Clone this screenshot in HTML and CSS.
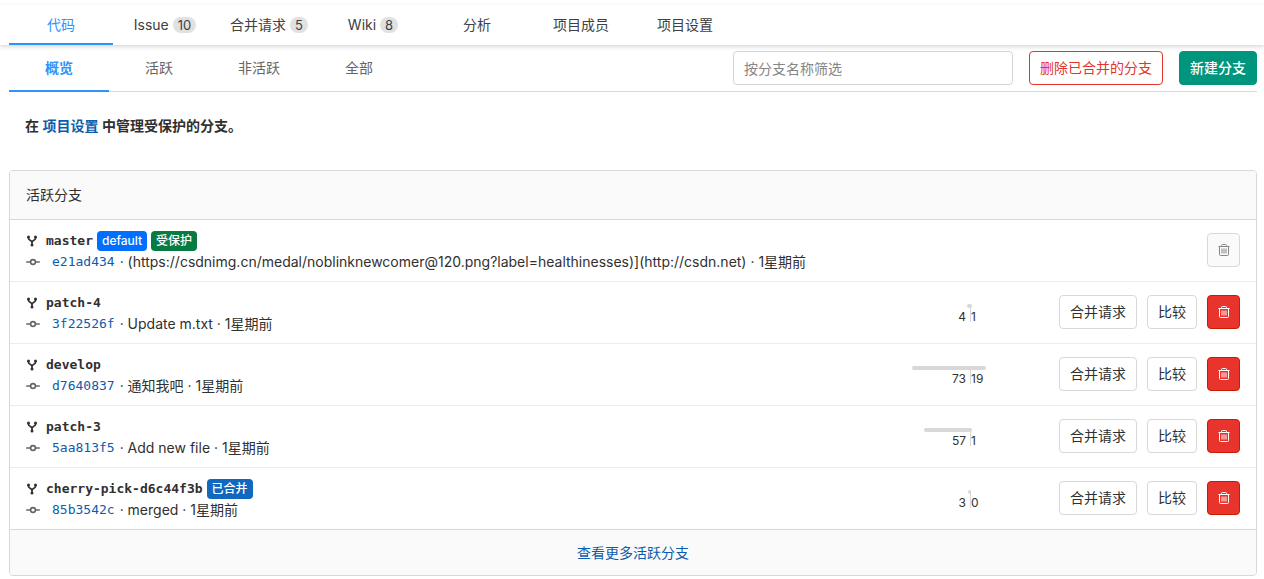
FILE: index.html
```html
<!DOCTYPE html>
<html lang="zh-CN">
<head>
<meta charset="utf-8">
<meta name="viewport" content="width=device-width, initial-scale=1">
<title>分支</title>
<link rel="stylesheet" href="styles.css">
</head>
<body>
<svg class="sprite" aria-hidden="true">
  <symbol id="fork" viewBox="0 0 12 12">
    <path d="M2.500 2v1.500C2.500 5.500 6 5 6 7.500V10M9.500 2v1.500C9.500 5.500 6 5 6 7.500" fill="none" stroke="currentColor" stroke-width="1.700"/>
    <circle cx="2.500" cy="2" r="1.500"/><circle cx="9.500" cy="2" r="1.500"/><circle cx="6" cy="10" r="1.500"/>
  </symbol>
  <symbol id="commit" viewBox="0 0 14 14">
    <path d="M0.700 7H4.500M9.500 7H13.300" fill="none" stroke="currentColor" stroke-width="1.500" stroke-linecap="round"/>
    <circle cx="7" cy="7" r="2.400" fill="none" stroke="currentColor" stroke-width="1.600"/>
  </symbol>
  <symbol id="trash" viewBox="0 0 12 14">
    <path d="M0.500 3.500h11M3.500 3.500v-1q0-1 1-1h3q1 0 1 1v1M1.500 3.500v8q0 1 1 1h7q1 0 1-1v-8M4 5.500v5M6 5.500v5M8 5.500v5" fill="none" stroke="currentColor"/>
  </symbol>
</svg>
<nav class="main-nav">
  <a class="current" href="#">代码</a>
  <a href="#">Issue<span class="count">10</span></a>
  <a href="#">合并请求<span class="count">5</span></a>
  <a href="#">Wiki<span class="count">8</span></a>
  <a href="#">分析</a>
  <a href="#">项目成员</a>
  <a href="#">项目设置</a>
</nav>
<main class="page">
  <div class="toolbar">
    <nav class="sub-nav">
      <a class="current" href="#">概览</a>
      <a href="#">活跃</a>
      <a href="#">非活跃</a>
      <a href="#">全部</a>
    </nav>
    <div class="tools">
      <input class="search" type="search" placeholder="按分支名称筛选" aria-label="按分支名称筛选">
      <button class="btn btn-outline-danger" type="button">删除已合并的分支</button>
      <button class="btn btn-success" type="button">新建分支</button>
    </div>
  </div>
  <p class="notice">在 <a href="#">项目设置</a> 中管理受保护的分支。</p>
  <section class="panel">
    <h2 class="panel-head">活跃分支</h2>
    <ul class="branches">
      <li class="branch">
        <div class="info">
          <div class="title"><svg class="fork"><use href="#fork"/></svg><a class="name" href="#">master</a><span class="badge default">default</span><span class="badge protected">受保护</span></div>
          <div class="commit"><svg class="commit-icon"><use href="#commit"/></svg><a class="sha" href="#">e21ad434</a><span>· (https://csdnimg.cn/medal/noblinknewcomer@120.png?label=healthinesses)](http://csdn.net) · 1星期前</span></div>
        </div>
        <div class="actions">
          <button class="btn btn-icon" type="button" disabled aria-label="删除"><svg class="trash"><use href="#trash"/></svg></button>
        </div>
      </li>
      <li class="branch">
        <div class="info">
          <div class="title"><svg class="fork"><use href="#fork"/></svg><a class="name" href="#">patch-4</a></div>
          <div class="commit"><svg class="commit-icon"><use href="#commit"/></svg><a class="sha" href="#">3f22526f</a><span>· Update m.txt · 1星期前</span></div>
        </div>
        <div class="graph">
          <div class="side behind"><i class="bar" style="width:3px"></i><span>4</span></div>
          <div class="side ahead"><i class="bar" style="width:2px"></i><span>1</span></div>
        </div>
        <div class="actions">
          <button class="btn" type="button">合并请求</button>
          <button class="btn" type="button">比较</button>
          <button class="btn btn-icon btn-danger" type="button" aria-label="删除"><svg class="trash"><use href="#trash"/></svg></button>
        </div>
      </li>
      <li class="branch">
        <div class="info">
          <div class="title"><svg class="fork"><use href="#fork"/></svg><a class="name" href="#">develop</a></div>
          <div class="commit"><svg class="commit-icon"><use href="#commit"/></svg><a class="sha" href="#">d7640837</a><span>· 通知我吧 · 1星期前</span></div>
        </div>
        <div class="graph">
          <div class="side behind"><i class="bar" style="width:58px"></i><span>73</span></div>
          <div class="side ahead"><i class="bar" style="width:16px"></i><span>19</span></div>
        </div>
        <div class="actions">
          <button class="btn" type="button">合并请求</button>
          <button class="btn" type="button">比较</button>
          <button class="btn btn-icon btn-danger" type="button" aria-label="删除"><svg class="trash"><use href="#trash"/></svg></button>
        </div>
      </li>
      <li class="branch">
        <div class="info">
          <div class="title"><svg class="fork"><use href="#fork"/></svg><a class="name" href="#">patch-3</a></div>
          <div class="commit"><svg class="commit-icon"><use href="#commit"/></svg><a class="sha" href="#">5aa813f5</a><span>· Add new file · 1星期前</span></div>
        </div>
        <div class="graph">
          <div class="side behind"><i class="bar" style="width:46px"></i><span>57</span></div>
          <div class="side ahead"><i class="bar" style="width:2px"></i><span>1</span></div>
        </div>
        <div class="actions">
          <button class="btn" type="button">合并请求</button>
          <button class="btn" type="button">比较</button>
          <button class="btn btn-icon btn-danger" type="button" aria-label="删除"><svg class="trash"><use href="#trash"/></svg></button>
        </div>
      </li>
      <li class="branch">
        <div class="info">
          <div class="title"><svg class="fork"><use href="#fork"/></svg><a class="name" href="#">cherry-pick-d6c44f3b</a><span class="badge merged">已合并</span></div>
          <div class="commit"><svg class="commit-icon"><use href="#commit"/></svg><a class="sha" href="#">85b3542c</a><span>· merged · 1星期前</span></div>
        </div>
        <div class="graph">
          <div class="side behind"><i class="bar" style="width:2px"></i><span>3</span></div>
          <div class="side ahead"><i class="bar" style="width:0"></i><span>0</span></div>
        </div>
        <div class="actions">
          <button class="btn" type="button">合并请求</button>
          <button class="btn" type="button">比较</button>
          <button class="btn btn-icon btn-danger" type="button" aria-label="删除"><svg class="trash"><use href="#trash"/></svg></button>
        </div>
      </li>
    </ul>
    <div class="panel-foot"><a href="#">查看更多活跃分支</a></div>
  </section>
</main>
</body>
</html>
```

FILE: styles.css
```css
* { box-sizing: border-box; }
body {
  margin: 0;
  background: #fff;
  color: #303030;
  font: 14px/20px Inter, "Noto Sans CJK SC", sans-serif;
}
a { color: #0b5cad; text-decoration: none; }
.sprite { display: none; }
svg { fill: currentColor; flex: none; }

.main-nav {
  display: flex;
  margin-top: 4px;
  padding: 0 8px 0 9px;
  border-top: 1px solid #fafafa;
  box-shadow: 0 2px 4px rgba(0, 0, 0, 0.15);
}
.main-nav a {
  display: flex;
  align-items: center;
  justify-content: center;
  gap: 4px;
  width: 104px;
  height: 40px;
  padding-top: 2px;
  border-bottom: 2px solid transparent;
  color: #404040;
}
.count {
  padding: 0 5px;
  border-radius: 8px;
  background: #e1e1e1;
  font-size: 13px;
  line-height: 16px;
}
.main-nav .current, .sub-nav .current { border-color: #2e93fa; color: #2e93fa; }

.page { padding: 0 7px 3px 9px; }
.toolbar {
  display: flex;
  justify-content: space-between;
  align-items: flex-start;
  border-bottom: 1px solid #d8d8d8;
}
.sub-nav { display: flex; margin-bottom: -1px; }
.sub-nav a {
  width: 100px;
  height: 47px;
  padding-top: 13px;
  border-bottom: 2px solid transparent;
  color: #666;
  text-align: center;
}
.sub-nav .current { font-weight: 600; }
.tools { display: flex; gap: 16px; padding-top: 6px; }
.search {
  width: 280px;
  height: 34px;
  padding: 6px 10px;
  border: 1px solid #d4d4d4;
  border-radius: 4px;
  font: inherit;
}
.search::placeholder { color: #868686; opacity: 1; }
.btn {
  height: 34px;
  padding: 0 10px;
  border: 1px solid #d8d8d8;
  border-radius: 4px;
  background: #fff;
  color: #303030;
  font: inherit;
  white-space: nowrap;
}
.btn-outline-danger { border-color: #e5342d; color: #e5342d; }
.btn-success { border-color: #00967d; background: #00967d; color: #fff; font-weight: 500; }
.btn-icon { display: grid; place-items: center; width: 33px; padding: 0; }
.btn-icon:disabled { background: #fafafa; color: #868686; }
.btn-danger { border-color: #c91c00; background: #e9342d; color: #fff; }

.notice { margin: 24px 16px 34px; font-weight: 600; }

.panel { border: 1px solid #d8d8d8; border-radius: 4px; overflow: hidden; }
.panel-head {
  margin: 0;
  padding: 14px 16px;
  border-bottom: 1px solid #d8d8d8;
  background: #fafafa;
  font-size: 14px;
  font-weight: 400;
}
.branches { margin: 0; padding: 0; list-style: none; }
.branch {
  display: grid;
  grid-template-columns: 1fr 160px 190px;
  align-items: start;
  padding: 10px 16px 9px;
  border-bottom: 1px solid #ececec;
}
.branch:last-child { border-color: #d8d8d8; }
.info { grid-column: 1 / 2; grid-row: 1; white-space: nowrap; }
.title, .commit { display: flex; align-items: center; height: 21px; }
.title { height: 21px; }
.name, .sha { font-family: "DejaVu Sans Mono", monospace; font-size: 13px; }
.name { margin-left: 8px; color: #303030; font-weight: 700; }
.sha { margin: 0 5px 0 12px; }
.fork { width: 12px; height: 12px; }
.commit-icon { width: 14px; height: 14px; color: #666; }
.badge {
  margin-left: 4px;
  padding: 0 5px;
  border-radius: 4px;
  color: #fff;
  font-size: 12px;
  font-weight: 500;
}
.default { background: #006eff; }
.protected { background: #087b42; }
.merged { background: #1068bf; }
.graph { grid-column: 2; grid-row: 1; display: flex; padding-top: 12px; font-size: 12px; line-height: 18px; }
.side { display: flex; flex-direction: column; width: 50%; }
.behind { align-items: flex-end; }
.behind span { padding-right: 4px; }
.ahead { background: linear-gradient(#d8d8d8, #d8d8d8) 0 0 / 1px 18px no-repeat; }
.ahead span { padding-left: 1px; }
.bar { height: 4px; background: #d8d8d8; }
.behind .bar { border-radius: 2px 0 0 2px; }
.ahead .bar { border-radius: 0 2px 2px 0; }
.actions { grid-column: 3; grid-row: 1; display: flex; justify-content: flex-end; gap: 10px; padding-top: 3px; }
.trash { width: 12px; height: 14px; }
.panel-foot { padding: 13px 16px 12px; background: #fafafa; text-align: center; }
```
